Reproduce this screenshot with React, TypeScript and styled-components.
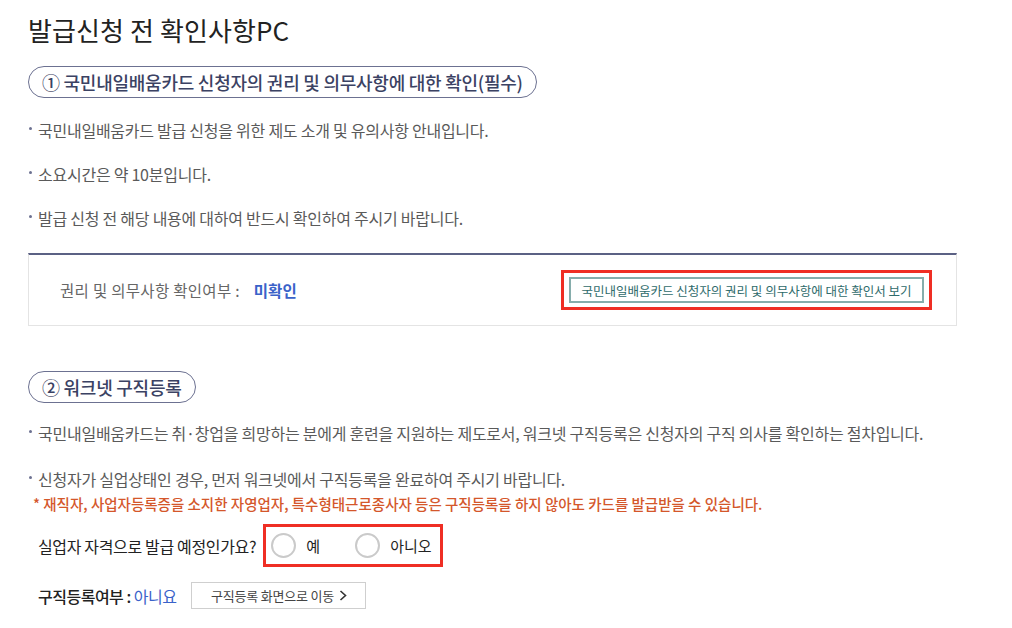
import styled, { createGlobalStyle } from "styled-components";

const GlobalStyle = createGlobalStyle`
    body {
        margin: 0;
        background: #fff;
        font-family: "Noto Sans CJK KR", "Noto Sans", sans-serif;
        color: #222;
    }
`;

const Page = styled.div`
    padding: 12px 0 0 28px;
    width: 929px;
`;

const Title = styled.h1`
    margin: 0;
    font-size: 26px;
    font-weight: 400;
    line-height: 36px;
    letter-spacing: 0.1px;
    color: #222;
`;

const SectionPill = styled.div<{ $top: number }>`
    display: inline-flex;
    align-items: center;
    box-sizing: border-box;
    height: 32px;
    margin-top: ${({ $top }) => $top}px;
    padding: 0 13px;
    border: 1.5px solid #6c7191;
    border-radius: 16px;
    font-size: 18px;
    font-weight: 500;
    letter-spacing: -0.25px;
    color: #3b4263;
`;

const Bullets = styled.ul<{ $top: number; $gap: number }>`
    list-style: none;
    margin: ${({ $top }) => $top}px 0 0;
    padding: 0;
    display: flex;
    flex-direction: column;
    gap: ${({ $gap }) => $gap}px;
`;

const Bullet = styled.li`
    position: relative;
    padding-left: 10px;
    font-size: 16px;
    line-height: 22px;
    letter-spacing: -0.25px;
    color: #5a5a5a;
    &::before {
        content: "";
        position: absolute;
        left: 1px;
        top: 8px;
        width: 3px;
        height: 3px;
        border-radius: 50%;
        background: #6c7191;
    }
`;

const CheckBox = styled.div`
    display: flex;
    align-items: center;
    justify-content: space-between;
    box-sizing: border-box;
    height: 73px;
    margin-top: 24px;
    padding: 0 24px 0 31px;
    border: 1px solid #e4e4e4;
    border-top: 2px solid #5b6184;
`;

const StatusText = styled.span`
    font-size: 15.5px;
    letter-spacing: 0.3px;
    color: #666;
`;

const StatusValue = styled.strong`
    margin-left: 14px;
    font-weight: 700;
    letter-spacing: 0;
    color: #3a62c9;
`;

const Highlight = styled.div<{ $pad: string }>`
    display: flex;
    align-items: center;
    border: 3px solid #ef2e24;
    padding: ${({ $pad }) => $pad};
`;

const OutlineButton = styled.button`
    height: 26px;
    width: 355px;
    padding: 0;
    background: #fff;
    border: 2px solid #86adac;
    font-family: inherit;
    font-size: 12.5px;
    letter-spacing: 0;
    color: #2f6b6b;
    cursor: pointer;
`;

const Notice = styled.p`
    margin: 4px 0 0 5px;
    font-size: 14.5px;
    line-height: 20px;
    font-weight: 500;
    letter-spacing: 0;
    color: #d4572b;
`;

const QuestionRow = styled.div`
    display: flex;
    align-items: center;
    gap: 7px;
    margin-top: 10px;
    padding-left: 10px;
`;

const Question = styled.span`
    font-size: 16px;
    letter-spacing: -0.35px;
    color: #222;
`;

const RadioLabel = styled.label<{ $width: number }>`
    display: flex;
    align-items: center;
    gap: 10px;
    width: ${({ $width }) => $width}px;
    height: 37px;
    font-size: 15px;
    color: #222;
    cursor: pointer;
`;

const RadioCircle = styled.span`
    box-sizing: border-box;
    width: 25px;
    height: 25px;
    border: 2px solid #cacaca;
    border-radius: 50%;
    background: #fff;
`;

const ResultRow = styled.div`
    display: flex;
    align-items: center;
    gap: 15px;
    margin-top: 15px;
    padding-left: 10px;
`;

const ResultText = styled.span`
    font-size: 16px;
    font-weight: 500;
    letter-spacing: -0.5px;
    color: #222;
`;

const ResultValue = styled.span`
    font-weight: 400;
    color: #3a62c9;
`;

const MoveButton = styled.button`
    display: flex;
    align-items: center;
    justify-content: center;
    gap: 5px;
    height: 27px;
    width: 175px;
    background: #fff;
    border: 1px solid #cfcfcf;
    font-family: inherit;
    font-size: 13px;
    letter-spacing: -0.2px;
    color: #444;
    cursor: pointer;
`;

const section1 = [
    "국민내일배움카드 발급 신청을 위한 제도 소개 및 유의사항 안내입니다.",
    "소요시간은 약 10분입니다.",
    "발급 신청 전 해당 내용에 대하여 반드시 확인하여 주시기 바랍니다.",
];

const section2 = [
    "국민내일배움카드는 취·창업을 희망하는 분에게 훈련을 지원하는 제도로서, 워크넷 구직등록은 신청자의 구직 의사를 확인하는 절차입니다.",
    "신청자가 실업상태인 경우, 먼저 워크넷에서 구직등록을 완료하여 주시기 바랍니다.",
];

export default function App() {
    return (
        <>
            <GlobalStyle />
            <Page>
                <Title>발급신청 전 확인사항PC</Title>

                <SectionPill $top={18}>① 국민내일배움카드 신청자의 권리 및 의무사항에 대한 확인(필수)</SectionPill>
                <Bullets $top={21} $gap={22}>
                    {section1.map((text) => <Bullet key={text}>{text}</Bullet>)}
                </Bullets>

                <CheckBox>
                    <StatusText>
                        권리 및 의무사항 확인여부 :<StatusValue>미확인</StatusValue>
                    </StatusText>
                    <Highlight $pad="4px 5px">
                        <OutlineButton>국민내일배움카드 신청자의 권리 및 의무사항에 대한 확인서 보기</OutlineButton>
                    </Highlight>
                </CheckBox>

                <div>
                    <SectionPill $top={45}>② 워크넷 구직등록</SectionPill>
                </div>
                <Bullets $top={19} $gap={24}>
                    {section2.map((text) => <Bullet key={text}>{text}</Bullet>)}
                </Bullets>
                <Notice>* 재직자, 사업자등록증을 소지한 자영업자, 특수형태근로종사자 등은 구직등록을 하지 않아도 카드를 발급받을 수 있습니다.</Notice>

                <QuestionRow>
                    <Question>실업자 자격으로 발급 예정인가요?</Question>
                    <Highlight $pad="0 0 0 5px">
                        <RadioLabel $width={84}>
                            <RadioCircle />예
                        </RadioLabel>
                        <RadioLabel $width={85}>
                            <RadioCircle />아니오
                        </RadioLabel>
                    </Highlight>
                </QuestionRow>

                <ResultRow>
                    <ResultText>
                        구직등록여부 : <ResultValue>아니요</ResultValue>
                    </ResultText>
                    <MoveButton>
                        구직등록 화면으로 이동
                        <svg width="8" height="11" viewBox="0 0 8 11" fill="none">
                            <path d="M1.5 1l5 4.5-5 4.5" stroke="#333" strokeWidth="1.6" />
                        </svg>
                    </MoveButton>
                </ResultRow>
            </Page>
        </>
    );
}
